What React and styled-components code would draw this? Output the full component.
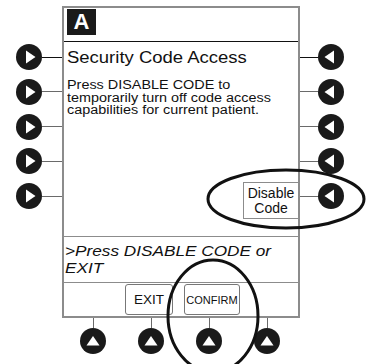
import React from "react";
import styled, { createGlobalStyle } from "styled-components";

const Global = createGlobalStyle`
  html, body { margin: 0; padding: 0; background: #fff; }
  body { font-family: "Liberation Sans", Arial, sans-serif; color: #111; }
`;

const Device = styled.div`
  position: relative;
  width: 367px;
  height: 364px;
  display: grid;
  grid-template-columns: 62px 238px 1fr;
  grid-template-rows: 6px 312px 1fr;
  overflow: hidden;
`;

const SideKeys = styled.div`
  grid-column: ${(p) => (p.$side === "left" ? "1" : "3")};
  grid-row: 1 / 4;
  display: flex;
  flex-direction: column;
  gap: 8.75px;
  padding-top: 44px;
  padding-left: ${(p) => (p.$side === "left" ? "16px" : "0")};
`;

const SideKey = styled.div`
  display: flex;
  align-items: center;
  height: 26px;
  flex-direction: ${(p) => (p.$side === "left" ? "row" : "row-reverse")};
  justify-content: ${(p) => (p.$side === "left" ? "flex-start" : "flex-end")};
  width: ${(p) => (p.$side === "left" ? "auto" : "44px")};
`;

const HLine = styled.div`
  flex: 1;
  height: 1px;
  background: ${(p) => (p.$dark ? "#111" : "#6a6a6a")};
`;

const Panel = styled.div`
  grid-column: 2;
  grid-row: 2;
  box-sizing: border-box;
  border: 2px solid #8c8c8c;
  display: flex;
  flex-direction: column;
`;

const Header = styled.div`
  height: 34px;
  box-sizing: border-box;
  border-bottom: 1px solid #111;
  padding: 1px 0 0 3px;
`;

const Badge = styled.div`
  width: 29px;
  height: 26px;
  background: #1a1a1a;
  color: #fff;
  font-weight: bold;
  font-size: 22px;
  display: flex;
  align-items: center;
  justify-content: center;
`;

const Content = styled.div`
  flex: 1;
  display: flex;
  flex-direction: column;
  border-bottom: 1px solid #8c8c8c;
  padding: 7px 0 17px 3px;
`;

const Stretch = styled.div`
  white-space: nowrap;
  transform: scaleX(${(p) => p.$k || 1.155});
  transform-origin: left center;
`;

const Title = styled(Stretch)`
  font-size: 16px;
  line-height: 18px;
`;

const Body = styled(Stretch)`
  margin-top: 12px;
  font-size: 12px;
  line-height: 12.5px;
`;

const SoftLabel = styled.div`
  margin-top: auto;
  align-self: flex-end;
  width: 55px;
  height: 37px;
  box-sizing: border-box;
  border: 1px solid #8c8c8c;
  border-right: none;
  display: flex;
  flex-direction: column;
  align-items: center;
  justify-content: center;
  font-size: 14px;
  line-height: 15px;
`;

const Prompt = styled.div`
  height: 46px;
  box-sizing: border-box;
  border-bottom: 1px solid #8c8c8c;
  padding: 5px 0 0 1px;
`;

const PromptText = styled(Stretch)`
  font-style: italic;
  font-size: 15.5px;
  line-height: 17px;
`;

const ButtonRow = styled.div`
  flex: 0 0 33px;
  display: flex;
  align-items: center;
  gap: 11px;
  padding-left: 61px;
`;

const SoftButton = styled.div`
  width: ${(p) => p.$w}px;
  height: 31px;
  box-sizing: border-box;
  border: 1px solid #777;
  border-radius: 3px;
  display: flex;
  align-items: center;
  justify-content: center;
  font-size: ${(p) => p.$fs}px;
`;

const BottomKeys = styled.div`
  grid-column: 1 / 4;
  grid-row: 3;
  display: flex;
  gap: 32px;
  padding-left: 80px;
`;

const BottomKey = styled.div`
  display: flex;
  flex-direction: column;
  align-items: center;
  width: 26px;
`;

const VLine = styled.div`
  width: 1px;
  height: 10px;
  background: #6a6a6a;
`;

const Overlay = styled.svg`
  position: absolute;
  left: 0;
  top: 0;
  pointer-events: none;
`;

const Key = ({ dir }) => {
  const pts = {
    right: "10,6.5 19.5,13 10,19.5",
    left: "16,6.5 6.5,13 16,19.5",
    up: "6.5,17.5 13,8 19.5,17.5",
  }[dir];
  return (
    <svg width="26" height="26" viewBox="0 0 26 26" style={{ flex: "none" }}>
      <circle cx="13" cy="13" r="13" fill="#1a1a1a" />
      <polygon points={pts} fill="#fff" />
    </svg>
  );
};

export default function App() {
  return (
    <>
      <Global />
      <Device>
        <SideKeys $side="left">
          {[0, 1, 2, 3, 4].map((i) => (
            <SideKey key={i} $side="left">
              <Key dir="right" />
              <HLine $dark={i === 0} />
            </SideKey>
          ))}
        </SideKeys>

        <Panel>
          <Header>
            <Badge>A</Badge>
          </Header>
          <Content>
            <Title>Security Code Access</Title>
            <Body $k={1.2}>
              Press DISABLE CODE to
              <br />
              temporarily turn off code access
              <br />
              capabilities for current patient.
            </Body>
            <SoftLabel>
              <span>Disable</span>
              <span>Code</span>
            </SoftLabel>
          </Content>
          <Prompt>
            <PromptText $k={1.11}>
              &gt;Press DISABLE CODE or
              <br />
              EXIT
            </PromptText>
          </Prompt>
          <ButtonRow>
            <SoftButton $w={48} $fs={13.5}>EXIT</SoftButton>
            <SoftButton $w={56} $fs={11}>CONFIRM</SoftButton>
          </ButtonRow>
        </Panel>

        <SideKeys $side="right">
          {[0, 1, 2, 3, 4].map((i) => (
            <SideKey key={i} $side="right">
              <Key dir="left" />
              <HLine $dark={i === 0} />
            </SideKey>
          ))}
        </SideKeys>

        <BottomKeys>
          {[0, 1, 2, 3].map((i) => (
            <BottomKey key={i}>
              <VLine />
              <Key dir="up" />
            </BottomKey>
          ))}
        </BottomKeys>

        <Overlay width="367" height="364" viewBox="0 0 367 364">
          <ellipse cx="286" cy="199" rx="78" ry="29" fill="none" stroke="#111" strokeWidth="3" />
          <ellipse cx="213" cy="316" rx="45" ry="56" fill="none" stroke="#111" strokeWidth="3" />
        </Overlay>
      </Device>
    </>
  );
}
